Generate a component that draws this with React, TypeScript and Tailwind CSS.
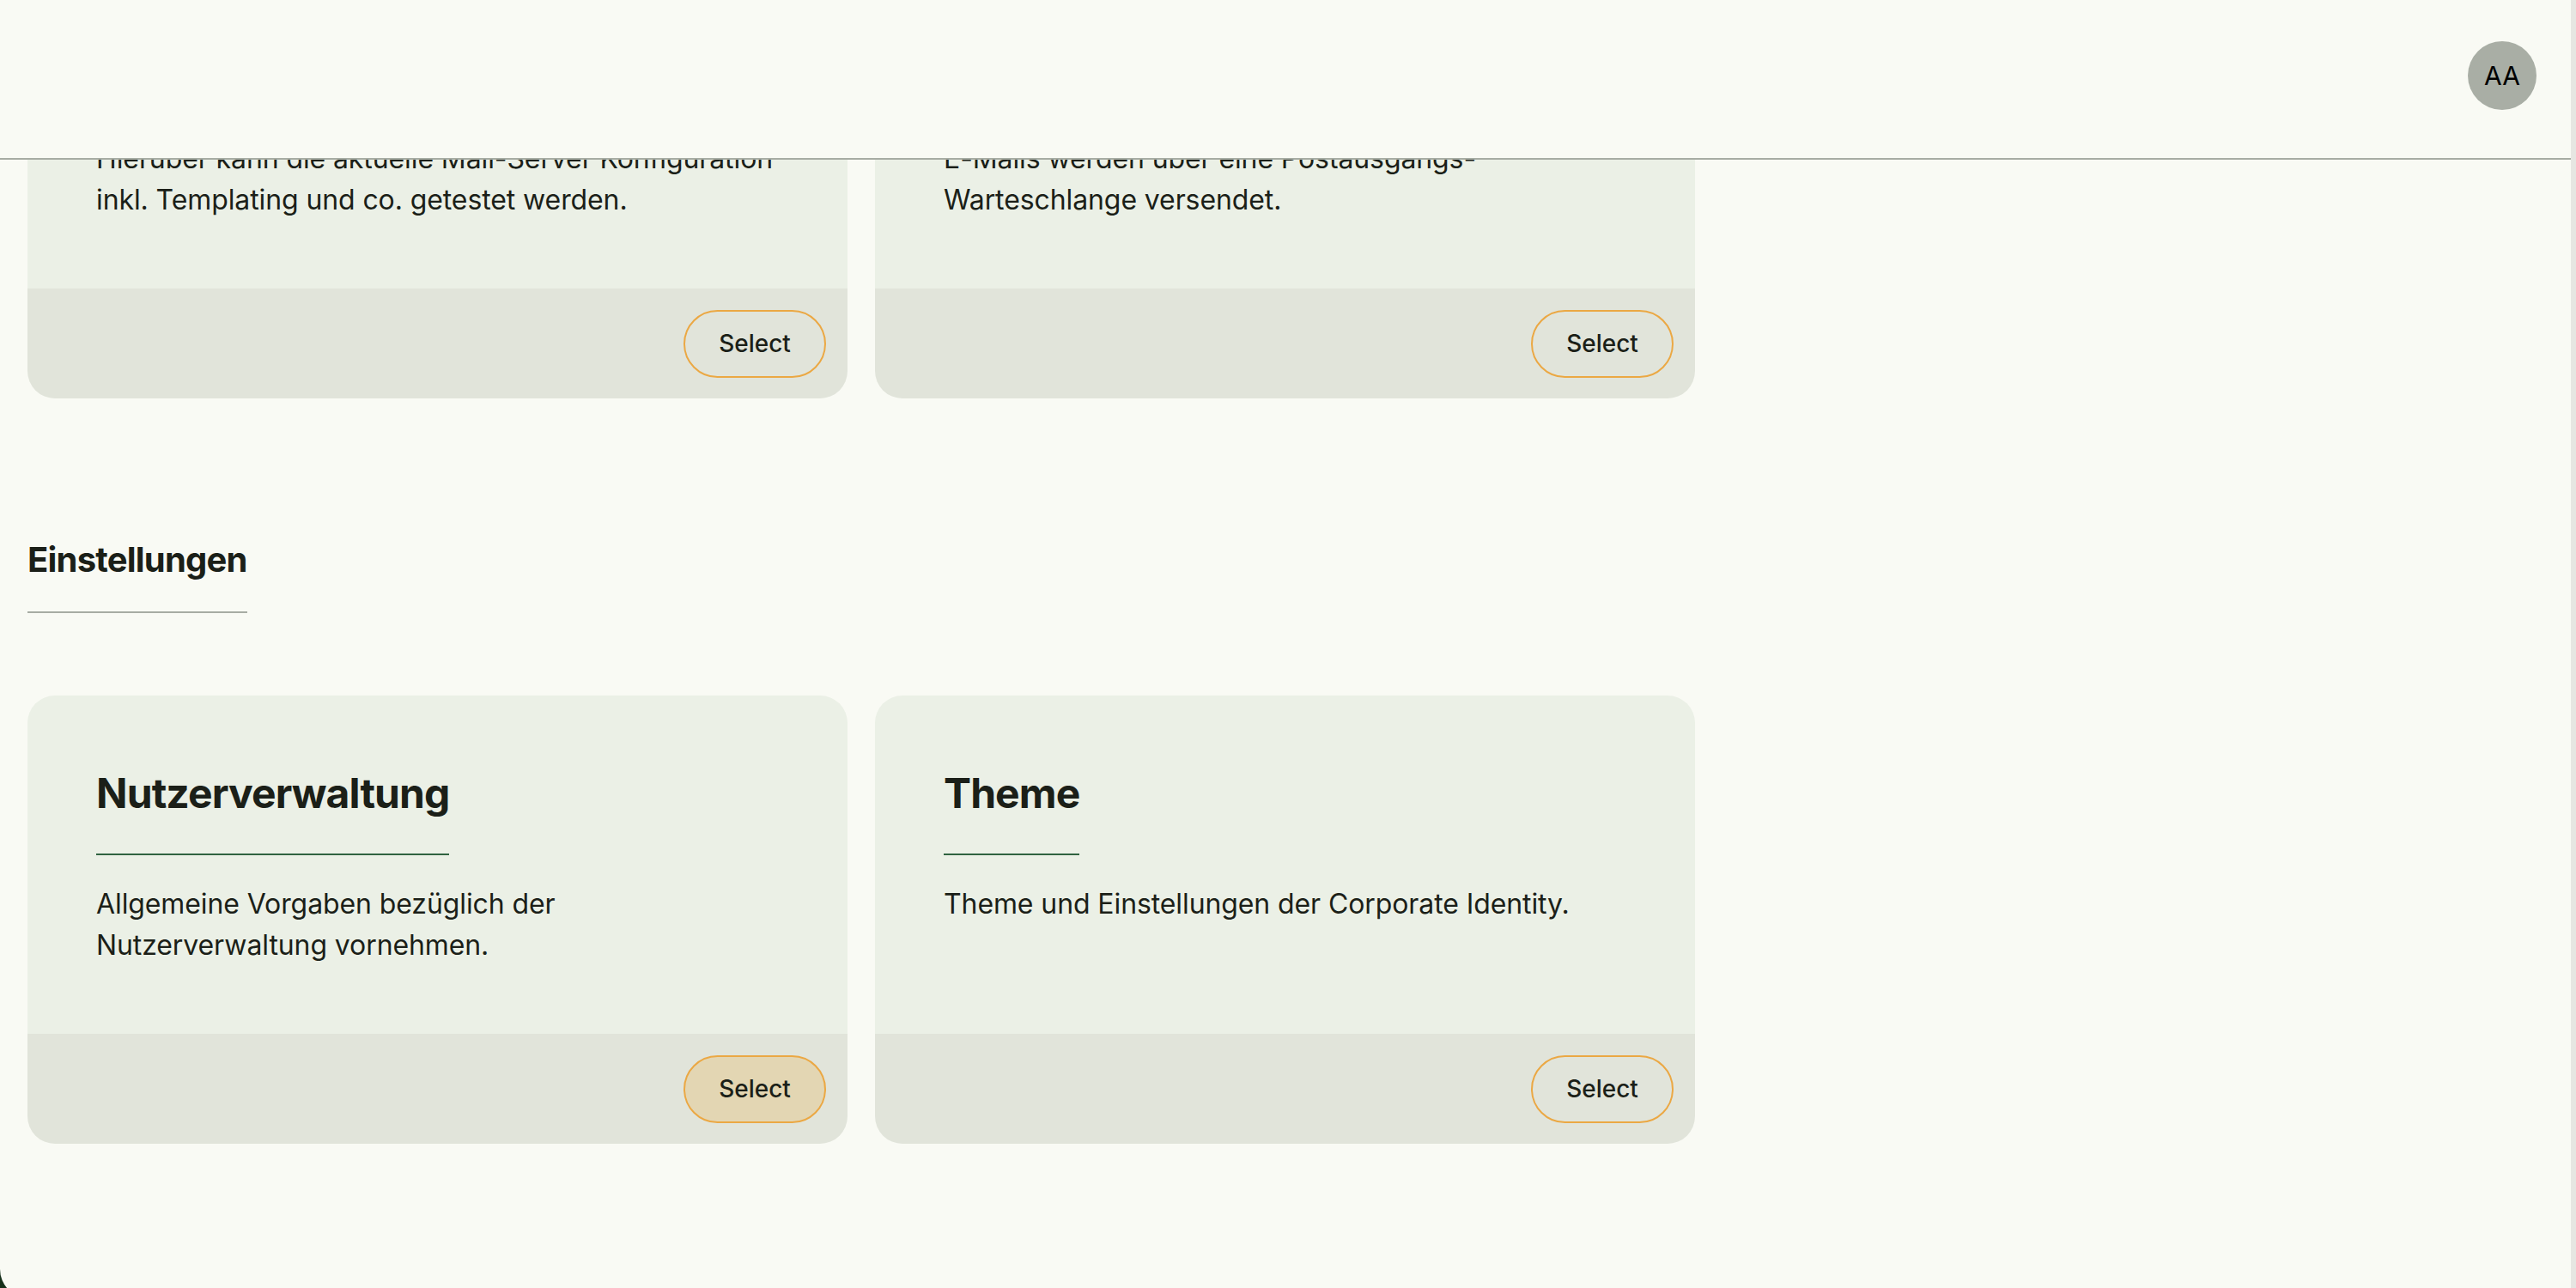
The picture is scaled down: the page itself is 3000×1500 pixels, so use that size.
import React from "react";

type Card = {
  title: string;
  lines: string[];
  active?: boolean;
};

const topCards: Card[] = [
  {
    title: "Mail-Test",
    lines: [
      "Hierüber kann die aktuelle Mail-Server Konfiguration",
      "inkl. Templating und co. getestet werden.",
    ],
  },
  {
    title: "Mail-Warteschlange",
    lines: ["E-Mails werden über eine Postausgangs-", "Warteschlange versendet."],
  },
];

const settingCards: Card[] = [
  {
    title: "Nutzerverwaltung",
    lines: ["Allgemeine Vorgaben bezüglich der", "Nutzerverwaltung vornehmen."],
    active: true,
  },
  {
    title: "Theme",
    lines: ["Theme und Einstellungen der Corporate Identity."],
  },
];

function TileCard({ card }: { card: Card }) {
  return (
    <div className="flex flex-col overflow-hidden rounded-[32px]">
      <div className="flex flex-1 flex-col bg-[#ebf0e6] px-[80px] pt-[86px] pb-[79px]">
        <h3 className="self-start whitespace-nowrap border-b-2 border-[#2f6340] pb-[42px] text-[48px] font-bold leading-[56px] tracking-[-0.9px] text-[#1b1f18]">
          {card.title}
        </h3>
        <p className="mt-[33px] whitespace-nowrap text-[32px] leading-[48px] tracking-[-0.1px] text-[#1b1f18]">
          {card.lines.map((l, i) => (
            <React.Fragment key={i}>
              {i > 0 && <br />}
              {l}
            </React.Fragment>
          ))}
        </p>
      </div>
      <div className="flex h-[128px] items-center justify-end bg-[#e1e4da] pr-[25px]">
        <button
          className={
            "flex h-[79px] w-[166px] items-center justify-center rounded-full border-2 border-[#eba844] text-[28px] font-medium text-[#1b1f18] " +
            (card.active ? "bg-[#e3d6b3]" : "bg-transparent")
          }
        >
          Select
        </button>
      </div>
    </div>
  );
}

export default function App() {
  return (
    <div className="h-[1500px] w-[3000px] overflow-hidden bg-[#17301b] font-['Inter',sans-serif]">
      <div className="flex h-[1512px] overflow-hidden rounded-bl-[34px] bg-[#f9faf4]">
        <div className="relative flex-1 overflow-hidden">
          <header className="absolute inset-x-0 top-0 z-10 flex h-[186px] items-start justify-end border-b-2 border-[#a7aca3] bg-[#f9faf4] pt-[48px] pr-[40px]">
            <div className="flex h-[80px] w-[80px] items-center justify-center rounded-full bg-[#a9aea5] text-[30px] leading-none text-black">
              AA
            </div>
          </header>
          <main className="mt-[-58px] px-[32px]">
            <div className="grid grid-cols-[955px_955px] gap-[32px]">
              {topCards.map((c) => (
                <TileCard key={c.title} card={c} />
              ))}
            </div>
            <div className="mt-[164px] flex">
              <h2 className="border-b-2 border-[#a7aca3] pb-[36px] text-[40px] font-bold leading-[48px] tracking-[-0.8px] text-[#1b1f18]">
                Einstellungen
              </h2>
            </div>
            <div className="mt-[96px] grid grid-cols-[955px_955px] gap-[32px]">
              {settingCards.map((c) => (
                <TileCard key={c.title} card={c} />
              ))}
            </div>
          </main>
        </div>
        <div className="w-[6px] bg-[#e6e6e2]" />
      </div>
    </div>
  );
}
